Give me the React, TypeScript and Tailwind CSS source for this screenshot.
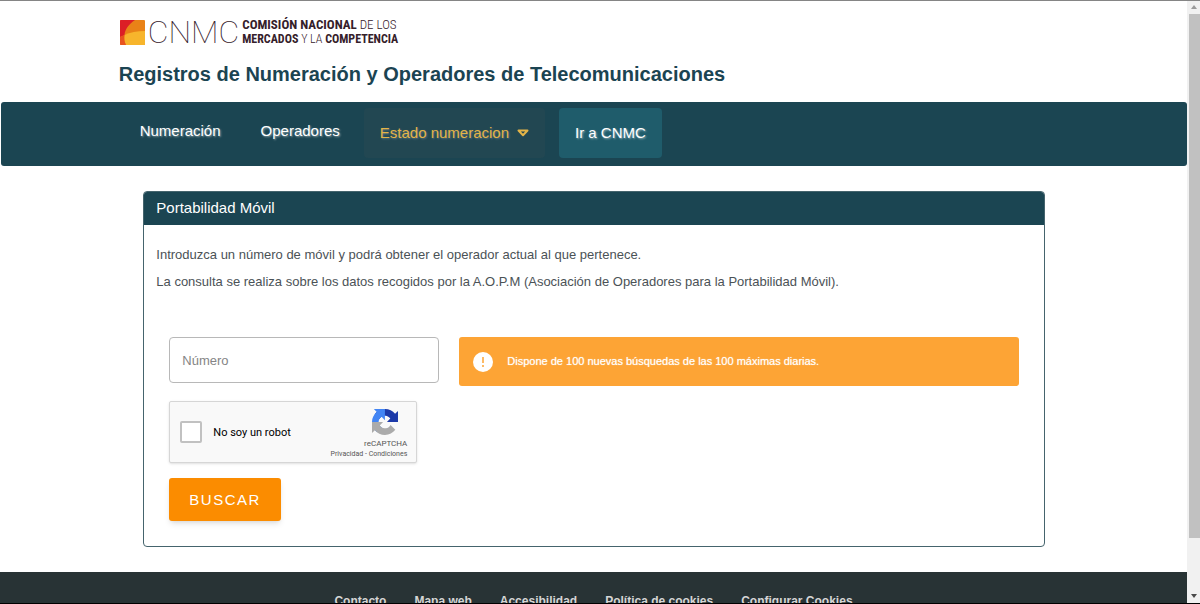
import { useState } from "react";

const footerLinks = [
  "Contacto",
  "Mapa web",
  "Accesibilidad",
  "Política de cookies",
  "Configurar Cookies",
];

// CNMC brand mark: colour tile, thin initials and the two-line full name.
function Logo() {
  return (
    <a href="#" aria-label="CNMC" className="ml-px flex h-7 items-center text-[#35202a]">
      <svg viewBox="0 0 25 25" className="h-[25px] w-[25px] shrink-0">
        <rect width="25" height="25" rx="1" fill="#e98217" />
        <path d="M1 0h14C9 4 5 9 4.500 15L0 17V1a1 1 0 0 1 1-1z" fill="#dc1f26" />
        <path d="M25 11v13a1 1 0 0 1-1 1H6C4 21 4 18 4.500 15 10 12.500 17 11 25 11z" fill="#f7b52c" />
        <path d="M0 17l4.500-2C4 18 4 21 6 25H1a1 1 0 0 1-1-1z" fill="#e8541f" />
      </svg>
      <span className="ml-[3px] font-[Roboto] text-[32px] leading-7 font-thin">CNMC</span>
      <span className="ml-[3px] font-['Roboto_Condensed',Roboto,sans-serif] leading-[14px] whitespace-nowrap">
        <span className="block text-[13px] leading-[14px]">
          <b>COMISIÓN NACIONAL</b> <span className="font-light">DE LOS</span>
        </span>
        <span className="block text-[12px] leading-[14px]">
          <b>MERCADOS</b> <span className="font-light">Y LA</span> <b>COMPETENCIA</b>
        </span>
      </span>
    </a>
  );
}

function Header() {
  return (
    <header className="px-[10%] pt-[17px] pb-[15px]">
      <Logo />
      <h1 className="mt-4 text-[20px] leading-[25px] font-bold text-[#1b4452]">
        Registros de Numeración y Operadores de Telecomunicaciones
      </h1>
    </header>
  );
}

function NavBar() {
  return (
    <nav className="ml-px flex h-16 shrink-0 items-start rounded-[3px] bg-[#1b4552] px-[10%] pt-[6px] text-[15px] text-white text-shadow-[1px_1px_2px_#ffffff80]">
      <a href="#" className="px-5 pt-3 leading-[22px]">
        Numeración
      </a>
      <a href="#" className="px-5 pt-3 leading-[22px]">
        Operadores
      </a>
      <button
        type="button"
        className="ml-1 flex h-[50px] items-center gap-2 rounded bg-[#224752] px-4 text-[#e3b448] text-shadow-[1px_1px_2px_#ffffff40]"
      >
        Estado numeracion
        <svg viewBox="0 0 12 8" className="h-2 w-3">
          <path d="M1.500 1.500h9L6 6.300z" fill="none" stroke="currentColor" strokeWidth="2" strokeLinejoin="round" />
        </svg>
      </button>
      <a
        href="#"
        className="ml-[14px] flex h-[50px] items-center rounded bg-[#1f5c6b] px-4"
      >
        Ir a CNMC
      </a>
    </nav>
  );
}

function RecaptchaMark() {
  return (
    <svg viewBox="0 0 64 64" className="h-[26px] w-[26px]">
      <path
        fill="#1c3aa9"
        d="M64 31.955l-.033-1.370V4.687l-7.160 7.160C50.948 4.674 42.033.093 32.050.093c-10.400 0-19.622 4.960-25.458 12.640l11.736 11.860a15.550 15.550 0 0 1 4.754-5.334c2.050-1.600 4.952-2.906 8.968-2.906.485 0 .86.057 1.135.163 4.976.393 9.288 3.140 11.828 7.124l-8.307 8.307L64 31.953"
      />
      <path
        fill="#4285f4"
        d="M31.862.094l-1.370.033H4.594l7.160 7.160C4.580 13.147 0 22.060 0 32.046c0 10.400 4.960 19.622 12.640 25.458L24.500 45.768a15.550 15.550 0 0 1-5.334-4.754c-1.600-2.050-2.906-4.952-2.906-8.968 0-.485.057-.86.163-1.135.393-4.976 3.140-9.288 7.124-11.828l8.307 8.307L31.860.095"
      />
      <path
        fill="#ababab"
        d="M.001 32.045l.033 1.370v25.898l7.160-7.160c5.860 7.173 14.774 11.754 24.760 11.754 10.400 0 19.622-4.960 25.458-12.640l-11.736-11.860a15.550 15.550 0 0 1-4.754 5.334c-2.050 1.600-4.952 2.906-8.968 2.906-.485 0-.86-.057-1.135-.163-4.976-.393-9.288-3.140-11.828-7.124l8.307-8.307L0 32.045"
      />
    </svg>
  );
}

function Recaptcha() {
  const [checked, setChecked] = useState(false);
  return (
    <div className="flex h-[62px] w-[248px] items-center rounded-[2px] border border-[#d6d6d6] bg-[#f9f9f9] pr-[9px] pl-[10px] font-[Roboto] shadow-sm">
      <label className="flex flex-1 items-center gap-[11px] text-[11px] text-black">
        <input
          type="checkbox"
          checked={checked}
          onChange={(e) => setChecked(e.target.checked)}
          className="h-[22px] w-[22px] appearance-none rounded-[2px] border-2 border-[#c1c1c1] bg-white checked:bg-[#4285f4]"
        />
        No soy un robot
      </label>
      <div className="flex flex-col items-end text-[#555]">
        <div className="mt-1 mr-[9px]">
          <RecaptchaMark />
        </div>
        <span className="mt-1 text-[8px] leading-[10px]">reCAPTCHA</span>
        <span className="text-[7px] leading-[10px]">
          <a href="#">Privacidad</a> - <a href="#">Condiciones</a>
        </span>
      </div>
    </div>
  );
}

function SearchCard() {
  const [phone, setPhone] = useState("");
  return (
    <section className="mx-auto mt-[25px] w-[76%] overflow-hidden rounded border border-[#45646d]">
      <h2 className="bg-[#1b4552] px-3 pb-px text-[15px] leading-8 text-white">Portabilidad Móvil</h2>
      <div className="px-3 pt-4 pb-[25px] text-[13px] leading-[27px] text-[#4b5256]">
        <p>Introduzca un número de móvil y podrá obtener el operador actual al que pertenece.</p>
        <p>
          La consulta se realiza sobre los datos recogidos por la A.O.P.M (Asociación de Operadores
          para la Portabilidad Móvil).
        </p>

        <form className="mt-[42px] px-[13px]" onSubmit={(e) => e.preventDefault()}>
          <div className="flex items-start gap-5">
            <input
              type="tel"
              aria-label="Número"
              placeholder="Número"
              value={phone}
              onChange={(e) => setPhone(e.target.value)}
              className="h-[46px] w-[270px] rounded border border-[#b8b8b8] px-3 text-[13px] placeholder:text-[#858585]"
            />
            <div
              role="status"
              className="flex h-[49px] flex-1 items-center gap-[14px] rounded-[3px] bg-[#fda435] px-[14px] text-[11px] text-white text-shadow-[0_0_1px_#ffffffb3]"
            >
              <svg viewBox="0 0 20 20" className="h-5 w-5">
                <circle cx="10" cy="10" r="10" fill="#fff" />
                <path d="M10 5v6M10 13v2" stroke="#fda435" strokeWidth="1.500" />
              </svg>
              Dispone de 100 nuevas búsquedas de las 100 máximas diarias.
            </div>
          </div>
          <div className="mt-[15px]">
            <Recaptcha />
          </div>
          <button
            type="submit"
            className="mt-[15px] flex h-[43px] items-center rounded-[3px] bg-[#fb8c00] px-5 text-[15px] tracking-widest text-white shadow-md"
          >
            BUSCAR
          </button>
        </form>
      </div>
    </section>
  );
}

function Footer() {
  return (
    <footer className="mt-[25px] flex-1 bg-[#283335] pt-5">
      <ul className="flex justify-center gap-7 text-[12px] leading-[18px] font-bold text-[#d6d6d6]">
        {footerLinks.map((label) => (
          <li key={label}>
            <a href="#">{label}</a>
          </li>
        ))}
      </ul>
    </footer>
  );
}

// Page scrollbar track with its arrows and thumb.
function ScrollRail() {
  return (
    <div className="flex w-[13px] shrink-0 flex-col items-center bg-[#f1f1f1]" aria-hidden="true">
      <svg viewBox="0 0 6 4" className="mt-1 mb-[5px] h-1 w-[6px] shrink-0">
        <path d="M3 0l3 4H0z" fill="#9a9a9a" />
      </svg>
      <div className="ml-px h-[87%] w-[11px] bg-[#c1c1c1]" />
      <svg viewBox="0 0 6 4" className="mt-auto mb-[5px] h-1 w-[6px] shrink-0">
        <path d="M0 0h6L3 4z" fill="#4a4a4a" />
      </svg>
    </div>
  );
}

export default function App() {
  return (
    <div className="flex h-screen overflow-hidden border-t border-b border-t-[#858585] border-b-black bg-white font-['Liberation_Sans',Arial,sans-serif]">
      <div className="flex min-w-0 flex-1 flex-col overflow-hidden">
        <Header />
        <NavBar />
        <main className="ml-px">
          <SearchCard />
        </main>
        <Footer />
      </div>
      <ScrollRail />
    </div>
  );
}
